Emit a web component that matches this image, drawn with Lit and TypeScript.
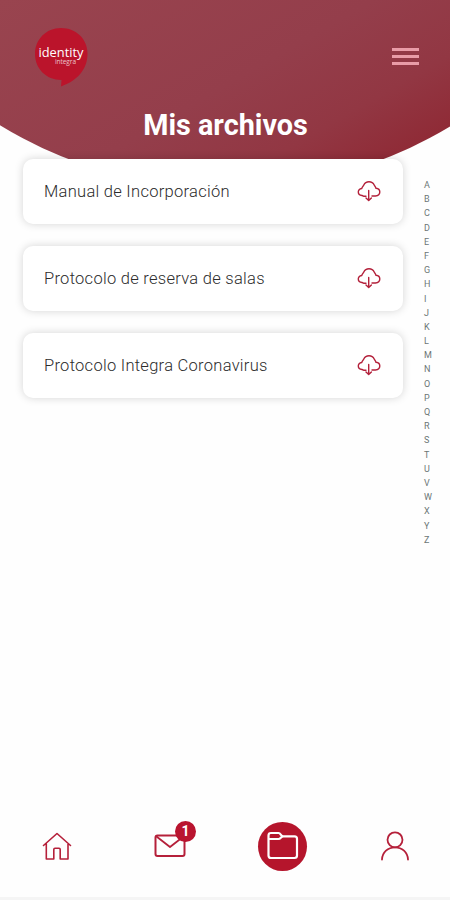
import { LitElement, html, css, svg } from "lit";
import { customElement, property } from "lit/decorators.js";

@customElement("file-card")
class FileCard extends LitElement {
  @property() label = "";
  static styles = css`
    :host { display: flex; align-items: center; justify-content: space-between; box-sizing: border-box;
      height: 65px; padding: 0 22px 0 21px; border-radius: 10px; background: #fff;
      box-shadow: 0 0 8px rgba(0, 0, 0, 0.17); }
    .label { font-size: 16.5px; line-height: 20px; font-weight: 300; letter-spacing: 0.28px; color: #2c2c2c; white-space: nowrap; }
    svg { display: block; margin-bottom: 2px; }
  `;
  render() {
    return html`<span class="label">${this.label}</span>
      <svg width="24" height="24" viewBox="0 0 24 24" fill="none" stroke="#b3203a" stroke-width="1.4" stroke-linecap="round" stroke-linejoin="round">
        <path d="M9 17.200H6.500L5 16.500C2.800 16.300 1.300 15 1.300 13.100C1.300 11 2.800 9.800 4.800 9.500C5 8 6.200 7.300 6.800 6C7.800 3.900 9.500 2.800 12 2.800C14.500 2.800 16.200 3.900 17.200 6C17.800 7.300 18.800 8 19 9.300C21.200 9.600 22.800 11 22.800 12.900C22.800 15.200 20.900 16.600 18.400 17H15"/>
        <path d="M11.700 11.400V21.200M9 18.900L11.700 21.600L14.400 18.900"/>
      </svg>`;
  }
}

@customElement("app-root")
class AppRoot extends LitElement {
  static styles = css`
    :host { display: flex; flex-direction: column; box-sizing: border-box; width: 450px; height: 900px;
      overflow: hidden; background: #fefefe; font-family: Roboto, "Liberation Sans", sans-serif; }
    header { height: 190px; flex: none; clip-path: circle(432px at 226px -243px);
      background: linear-gradient(150deg, #99444f 0%, #943e4b 48%, #923743 70%, #8d202b 100%); }
    .bar { display: flex; justify-content: space-between; align-items: flex-start; padding: 27px 31px 0 34px; height: 80px; }
    .logo-text { font-family: "Open Sans", sans-serif; fill: #fff; }
    .menu { display: flex; flex-direction: column; gap: 4px; margin-top: 21px; }
    .menu i { width: 27px; height: 3px; background: #e99ca7; }
    h1 { margin: 0; font-size: 28.8px; line-height: 36px; font-weight: 700; text-align: center; color: #fff; text-indent: 1px; }
    main { display: flex; flex: 1; margin-top: -31px; position: relative; }
    .files { display: flex; flex-direction: column; gap: 22px; width: 380px; margin-left: 23px; }
    .index { display: flex; flex-direction: column; margin: 19px 0 0 21px; }
    .index span { height: 14.2px; font-size: 9px; line-height: 14.2px; color: #6c7676; }
    nav { display: grid; grid-template-columns: repeat(4, 113px); height: 102px; flex: none; align-items: center; }
    .tab { display: flex; justify-content: center; position: relative; }
    .tab:last-child { margin-left: -2px; }
    .badge { position: absolute; left: 62px; top: -9px; width: 21px; height: 21px; border-radius: 50%;
      background: #b9142f; color: #fff; font-size: 14px; font-weight: 700; line-height: 21px; text-align: center; }
    .active { display: flex; align-items: center; justify-content: center; width: 49px; height: 49px;
      border-radius: 50%; background: #b5152c; }
    .edge { height: 3px; flex: none; background: #f5f5f5; }
    svg { display: block; }
  `;
  icon(body: unknown) {
    return html`<svg width="32" height="32" viewBox="0 0 32 32" fill="none" stroke="#b5203a" stroke-width="1.6" stroke-linejoin="round" stroke-linecap="round">${body}</svg>`;
  }
  render() {
    return html`
      <header>
        <div class="bar">
          <svg width="56" height="60" viewBox="0 0 56 60">
            <path fill="#bb142b" d="M27 1C42 1 53.500 12 53.500 26.500C53.500 43 43 53.500 27 59.500L27.500 53C12 53 1 41.500 1 27C1 12.500 12 1 27 1Z"/>
            <text class="logo-text" x="4.500" y="30" font-size="13" textLength="45" lengthAdjust="spacingAndGlyphs">identity</text>
            <text class="logo-text" x="21" y="37" font-size="6.500" textLength="21" fill-opacity="0.75">integra</text>
          </svg>
          <div class="menu"><i></i><i></i><i></i></div>
        </div>
        <h1>Mis archivos</h1>
      </header>
      <main>
        <div class="files">
          ${["Manual de Incorporación", "Protocolo de reserva de salas", "Protocolo Integra Coronavirus"].map(
            (name) => html`<file-card .label=${name}></file-card>`
          )}
        </div>
        <div class="index">${[..."ABCDEFGHIJKLMNOPQRSTUVWXYZ"].map((c) => html`<span>${c}</span>`)}</div>
      </main>
      <nav>
        <div class="tab">${this.icon(svg`<path d="M2.500 15.500L16 3.500L29.500 15.500M5.300 14V29H12.800V19.500Q12.800 18.300 14 18.300H18Q19.200 18.300 19.200 19.500V29H27V14"/>`)}</div>
        <div class="tab">
          ${this.icon(svg`<rect x="1.500" y="5.500" width="29" height="20.500" rx="2" stroke-width="2"/><path stroke-width="1.800" d="M2.500 6.500L16 17L29.500 6.500"/>`)}
          <span class="badge">1</span>
        </div>
        <div class="tab"><div class="active">
          <svg width="32" height="30" viewBox="0 0 32 30" fill="none" stroke="#fff" stroke-width="2.200" stroke-linejoin="round">
            <path d="M1.500 4.500Q1.500 2 4 2H11.500C14 2 13.500 5.300 16.500 5.300H27.500Q30 5.300 30 7.800V24.500Q30 27 27.500 27H4Q1.500 27 1.500 24.500ZM1.500 8H11.500C14 8 13.500 5.300 16.500 5.300"/>
          </svg>
        </div></div>
        <div class="tab">${this.icon(svg`<circle cx="16" cy="9.800" r="7.500" stroke-width="1.800"/><path stroke-width="1.800" d="M3 29.500C3.300 22.300 9 17.300 16 17.300C23 17.300 28.700 22.300 29 29.500"/>`)}</div>
      </nav>
      <div class="edge"></div>`;
  }
}
